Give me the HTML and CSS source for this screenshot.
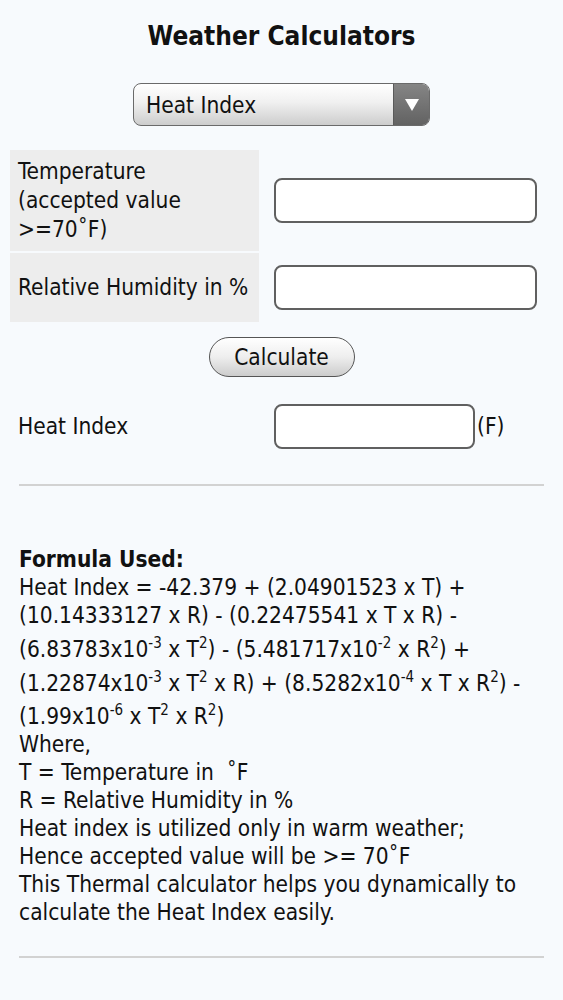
FILE: index.html
```html
<!DOCTYPE html>
<html lang="en">
<head>
    <meta charset="UTF-8">
    <meta name="viewport" content="width=device-width, initial-scale=1.0">
    <title>Weather Calculators</title>
    <link rel="stylesheet" href="styles.css">
</head>
<body>
    <h1>Weather Calculators</h1>

    <div class="select-box">
        <select id="calc-type">
            <option>Heat Index</option>
            <option>Wind Chill</option>
            <option>Dew Point</option>
        </select>
        <span class="select-arrow"></span>
    </div>

    <table class="calc-table">
        <tr>
            <td class="label">Temperature (accepted value &gt;=70˚F)</td>
            <td class="field"><input type="text" id="temperature"></td>
        </tr>
        <tr>
            <td class="label">Relative Humidity in %</td>
            <td class="field"><input type="text" id="humidity"></td>
        </tr>
        <tr>
            <td colspan="2" class="button-cell"><button id="calculate">Calculate</button></td>
        </tr>
        <tr>
            <td class="result-label">Heat Index</td>
            <td class="result-field"><input type="text" id="result" readonly><span class="unit">(F)</span></td>
        </tr>
    </table>

    <hr class="divider">

    <div class="formula">
        <b>Formula Used:</b><br>
        Heat Index = -42.379 + (2.04901523 x T) +<br>
        (10.14333127 x R) - (0.22475541 x T x R) -<br>
        (6.83783x10<sup>-3</sup> x T<sup>2</sup>) - (5.481717x10<sup>-2</sup> x R<sup>2</sup>) +<br>
        (1.22874x10<sup>-3</sup> x T<sup>2</sup> x R) + (8.5282x10<sup>-4</sup> x T x R<sup>2</sup>) -<br>
        (1.99x10<sup>-6</sup> x T<sup>2</sup> x R<sup>2</sup>)<br>
        Where,<br>
        T = Temperature in &nbsp;˚F<br>
        R = Relative Humidity in %<br>
        Heat index is utilized only in warm weather;<br>
        Hence accepted value will be &gt;= 70˚F<br>
        This Thermal calculator helps you dynamically to<br>
        calculate the Heat Index easily.
    </div>

    <hr class="divider bottom">

    <script>
        document.getElementById('calculate').addEventListener('click', () => {
            let T = parseFloat(document.getElementById('temperature').value);
            let R = parseFloat(document.getElementById('humidity').value);
            if (isNaN(T) || isNaN(R) || T < 70) {
                document.getElementById('result').value = '';
                return;
            }
            let hi = -42.379 + 2.04901523 * T + 10.14333127 * R - 0.22475541 * T * R
                - 6.83783e-3 * T * T - 5.481717e-2 * R * R + 1.22874e-3 * T * T * R
                + 8.5282e-4 * T * R * R - 1.99e-6 * T * T * R * R;
            document.getElementById('result').value = hi.toFixed(2);
        });
    </script>
</body>
</html>
```

FILE: styles.css
```css
body {
    margin: 8px;
    font-family: "DejaVu Sans Condensed", "DejaVu Sans", sans-serif;
    font-size: 22.5px;
    color: #111111;
    background-color: #f7fafd;
}
h1 {
    font-size: 26px;
    line-height: 30px;
    text-align: center;
    margin: 13px 0 32px;
}
.select-box {
    display: flex;
    width: 297px;
    height: 43px;
    margin: 0 auto;
    box-sizing: border-box;
    border: 1px solid #6a6a6a;
    border-radius: 8px;
    overflow: hidden;
    background: linear-gradient(#ffffff, #f0f0f0 45%, #cdcdcd);
}
.select-box select {
    flex: 1;
    appearance: none;
    -webkit-appearance: none;
    border: none;
    background: transparent;
    font-family: inherit;
    font-size: 22.5px;
    color: #111111;
    padding: 0 12px;
    outline: none;
}
.select-arrow {
    width: 35px;
    display: flex;
    align-items: center;
    justify-content: center;
    border-left: 1px solid #5a5a5a;
    background: linear-gradient(#858585, #626262);
}
.select-arrow::after {
    content: "";
    border-left: 7px solid transparent;
    border-right: 7px solid transparent;
    border-top: 12px solid #ffffff;
}
.calc-table {
    width: 100%;
    margin-top: 22px;
    border-spacing: 2px;
}
.calc-table td {
    padding: 7px 8px;
    line-height: 29px;
    vertical-align: middle;
}
.label {
    width: 233px;
    background-color: #ededed;
}
.field, .result-field {
    padding: 0 0 0 13px !important;
}
input {
    box-sizing: border-box;
    height: 45px;
    margin: 12px 0;
    border: 2px solid #606060;
    border-radius: 8px;
    background-color: #ffffff;
    font-family: inherit;
    font-size: 20px;
    padding: 0 8px;
    vertical-align: middle;
}
.field input {
    width: 263px;
}
.result-field input {
    width: 201px;
    margin: 14px 0;
}
.unit {
    margin-left: 2px;
    vertical-align: middle;
}
.button-cell {
    text-align: center;
    padding: 13px 0 11px !important;
}
#calculate {
    height: 40px;
    width: 146px;
    border: 1px solid #555555;
    border-radius: 20px;
    background: linear-gradient(#ffffff, #eeeeee 50%, #cccccc);
    font-family: inherit;
    font-size: 22.5px;
    color: #111111;
    padding: 0;
    cursor: pointer;
}
.divider {
    border: none;
    border-top: 2px solid #d2d2d2;
    margin: 19px 11px 0;
}
.formula {
    margin: 59px 11px 0;
    line-height: 28px;
    white-space: nowrap;
}
.formula sup {
    font-size: 15px;
}
.divider.bottom {
    margin-top: 30px;
}
```
